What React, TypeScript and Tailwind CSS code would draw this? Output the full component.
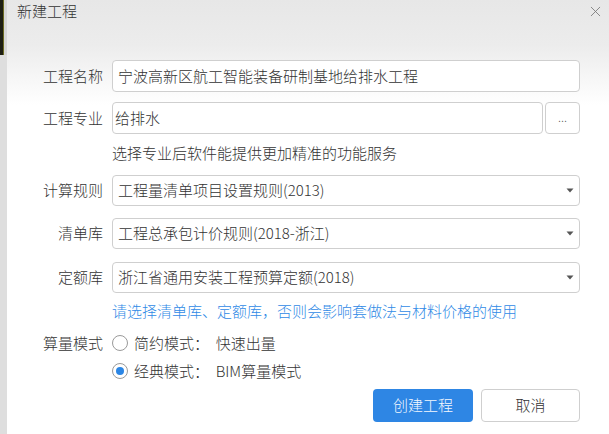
import { X } from "lucide-react";

const font = { fontFamily: '"Noto Sans CJK SC", "Liberation Sans", sans-serif' };

const Caret = () => (
  <svg width="8" height="5" viewBox="0 0 8 5" className="mr-[5px]">
    <path d="M0.5 0.5 L7.5 0.5 L4 4.5 Z" fill="#555" />
  </svg>
);

const Label = ({ children }: { children: string }) => (
  <div className="w-[96px] text-right text-[15px] text-[#333] shrink-0">{children}</div>
);

const Select = ({ value }: { value: string }) => (
  <div className="flex-1 h-[31px] ml-[9px] flex items-center justify-between border border-[#cfcfcf] rounded-[4px] bg-white pl-[5px]">
    <span className="text-[15px] text-[#333]">{value}</span>
    <Caret />
  </div>
);

const Radio = ({ checked, label }: { checked?: boolean; label: string }) => (
  <div className="flex items-center h-[24px]">
    <span className="w-[16px] h-[16px] rounded-full border border-[#9a9a9a] bg-white flex items-center justify-center">
      {checked && <span className="w-[8px] h-[8px] rounded-full bg-[#2b86e5]" />}
    </span>
    <span className="ml-[6px] text-[15px] text-[#333] whitespace-pre">{label}</span>
  </div>
);

export default function App() {
  return (
    <div className="w-[609px] h-[434px] flex overflow-hidden font-light" style={font}>
      {/* background behind the dialog */}
      <div className="w-[7px] flex flex-col shrink-0">
        <div className="h-[55px] flex">
          <div className="w-[4px] bg-[#1e1f14] border-r border-[#6b6a22]" />
          <div className="flex-1 bg-[#d6d6d6]" />
        </div>
        <div className="flex-1 bg-[#dedede]" />
      </div>

      <div className="flex-1 flex flex-col bg-[linear-gradient(to_bottom,#e7e7e7_0px,#ececec_45px,#ffffff_105px)]">
        {/* title */}
        <div className="h-[22px] flex items-center justify-between pl-[10px] pr-[5px]">
          <span className="text-[15px] text-[#333]">新建工程</span>
          <X className="w-[17px] h-[17px] text-[#777]" strokeWidth={1.2} />
        </div>

        <div className="pr-[29px]">
          <div className="mt-[38px] flex items-center">
            <Label>工程名称</Label>
            <div className="flex-1 h-[32px] ml-[9px] flex items-center border border-[#cfcfcf] rounded-[4px] bg-white pl-[5px] text-[15px] text-[#333]">
              宁波高新区航工智能装备研制基地给排水工程
            </div>
          </div>

          <div className="mt-[10px] flex items-center">
            <Label>工程专业</Label>
            <div className="flex-1 h-[32px] ml-[9px] flex items-center border border-[#cfcfcf] rounded-[4px] bg-white pl-[2px] text-[15px] text-[#333]">
              给排水
            </div>
            <div className="w-[35px] h-[32px] ml-[2px] flex items-center justify-center border border-[#cfcfcf] rounded-[4px] bg-white text-[12px] text-[#444] leading-none pb-[2px]">
              ...
            </div>
          </div>

          <div className="mt-[8px] h-[22px] leading-[22px] pl-[105px] text-[15px] text-[#333]">
            选择专业后软件能提供更加精准的功能服务
          </div>

          <div className="mt-[11px] flex items-center">
            <Label>计算规则</Label>
            <Select value="工程量清单项目设置规则(2013)" />
          </div>
          <div className="mt-[12px] flex items-center">
            <Label>清单库</Label>
            <Select value="工程总承包计价规则(2018-浙江)" />
          </div>
          <div className="mt-[13px] flex items-center">
            <Label>定额库</Label>
            <Select value="浙江省通用安装工程预算定额(2018)" />
          </div>

          <div className="mt-[7px] h-[22px] leading-[22px] pl-[105px] text-[15px] text-[#2f8ae6]">
            请选择清单库、定额库，否则会影响套做法与材料价格的使用
          </div>

          <div className="mt-[9px] flex items-center">
            <Label>算量模式</Label>
            <div className="ml-[9px]">
              <Radio label="简约模式：  快速出量" />
            </div>
          </div>
          <div className="mt-[4px] flex items-center pl-[105px]">
            <Radio checked label="经典模式：  BIM算量模式" />
          </div>

          <div className="mt-[6px] flex justify-end gap-[8px]">
            <button className="w-[100px] h-[33px] rounded-[4px] bg-[#2e86e4] text-[15px] text-[#f4f8ff]">
              创建工程
            </button>
            <button className="w-[99px] h-[33px] rounded-[4px] bg-white border border-[#cfcfcf] text-[15px] text-[#333]">
              取消
            </button>
          </div>
        </div>
      </div>
    </div>
  );
}
